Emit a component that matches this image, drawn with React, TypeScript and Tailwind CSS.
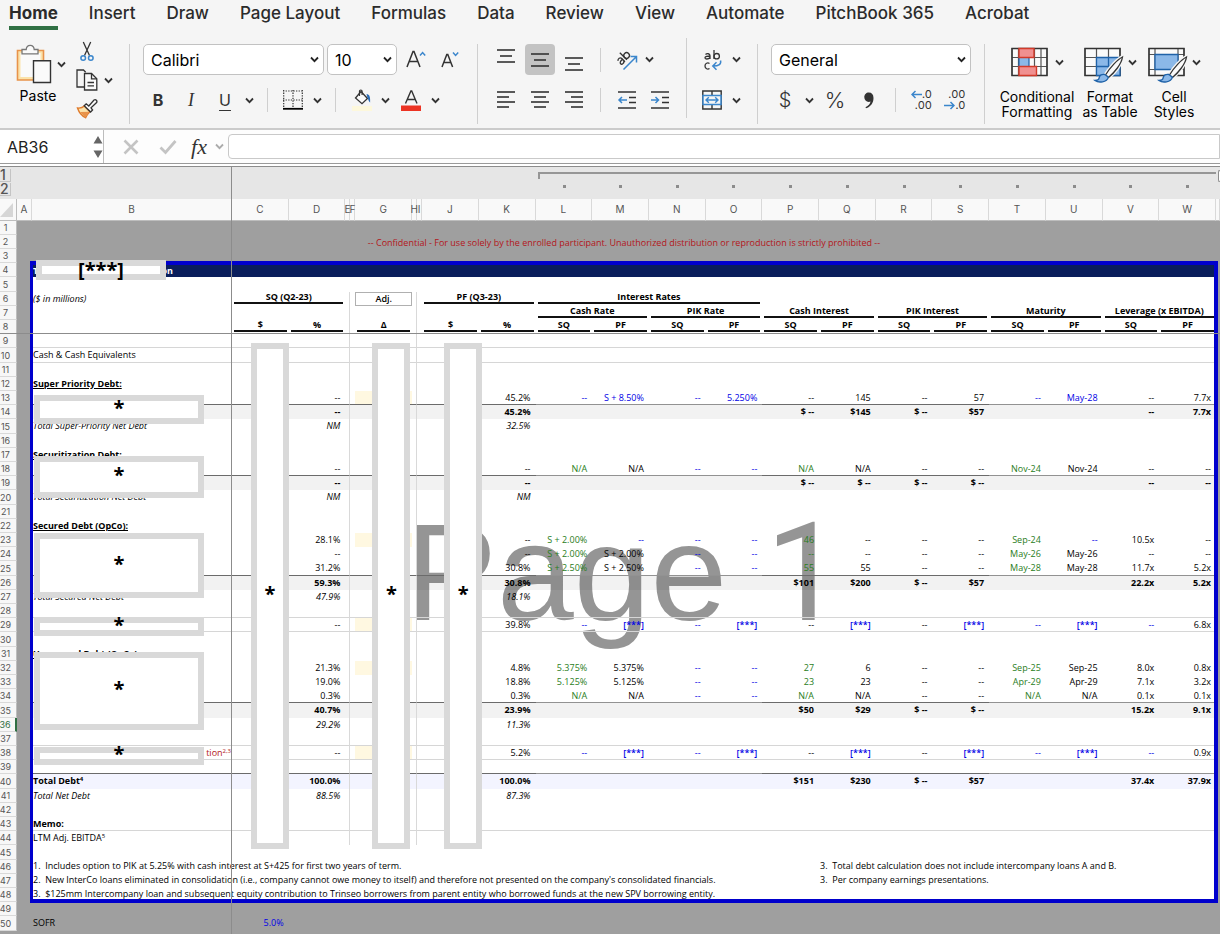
import React from 'react'
import clsx from 'clsx'

const TABS = ['Home', 'Insert', 'Draw', 'Page Layout', 'Formulas', 'Data', 'Review', 'View', 'Automate', 'PitchBook 365', 'Acrobat']

const COLUMNS = ['A', 'B', 'C', 'D', 'E', 'F', 'G', 'H', 'I', 'J', 'K', 'L', 'M', 'N', 'O', 'P', 'Q', 'R', 'S', 'T', 'U', 'V', 'W', 'X']
const BODY_COLUMNS = COLUMNS.slice(2, 23)
const GROUPED = COLUMNS.slice(11, 23)

const COLUMN_WIDTHS: Record<string, string> = {
  A: 'w-[15px]',
  B: 'w-[200px]',
  E: 'w-[5px]',
  F: 'w-[5px]',
  H: 'w-[5px]',
  I: 'w-[5px]',
  X: 'w-[4px]',
}

type Kind = 'normal' | 'total' | 'grand' | 'italic'

interface RowData {
  label?: React.ReactNode
  labelClass?: string
  kind?: Kind
  // a "b:" prefix is an input (blue), "g:" is a link to another sheet (green)
  cells?: Record<string, string>
}

const ROWS: Record<number, RowData> = {
  10: { label: 'Cash & Cash Equivalents' },
  12: { label: 'Super Priority Debt:', labelClass: 'font-bold underline' },
  13: {
    cells: { D: '--', K: '45.2%', L: 'b:--', M: 'b:S + 8.50%', N: 'b:--', O: 'b:5.250%', P: '--', Q: '145', R: '--', S: '57', T: 'b:--', U: 'b:May-28', V: '--', W: '7.7x' },
  },
  14: { kind: 'total', cells: { D: '--', K: '45.2%', P: '$ --', Q: '$145', R: '$ --', S: '$57', V: '--', W: '7.7x' } },
  15: { label: 'Total Super-Priority Net Debt', kind: 'italic', cells: { D: 'NM', K: '32.5%' } },
  17: { label: 'Securitization Debt:', labelClass: 'font-bold underline' },
  18: {
    cells: { D: '--', K: '--', L: 'g:N/A', M: 'N/A', N: 'b:--', O: 'b:--', P: 'g:N/A', Q: 'N/A', R: '--', S: '--', T: 'g:Nov-24', U: 'Nov-24', V: '--', W: '--' },
  },
  19: { kind: 'total', cells: { D: '--', K: '--', P: '$ --', Q: '$ --', R: '$ --', S: '$ --', V: '--', W: '--' } },
  20: { label: 'Total Securitization Net Debt', kind: 'italic', cells: { D: 'NM', K: 'NM' } },
  22: { label: 'Secured Debt (OpCo):', labelClass: 'font-bold underline' },
  23: {
    cells: { D: '28.1%', K: '--', L: 'g:S + 2.00%', M: 'b:--', N: 'b:--', O: 'b:--', P: 'g:46', Q: '--', R: '--', S: '--', T: 'g:Sep-24', U: 'b:--', V: '10.5x', W: '--' },
  },
  24: {
    cells: { D: '--', K: '--', L: 'g:S + 2.00%', M: 'S + 2.00%', N: 'b:--', O: 'b:--', P: 'g:--', Q: '--', R: '--', S: '--', T: 'g:May-26', U: 'May-26', V: '--', W: '--' },
  },
  25: {
    cells: { D: '31.2%', K: '30.8%', L: 'g:S + 2.50%', M: 'S + 2.50%', N: 'b:--', O: 'b:--', P: 'g:55', Q: '55', R: '--', S: '--', T: 'g:May-28', U: 'May-28', V: '11.7x', W: '5.2x' },
  },
  26: { kind: 'total', cells: { D: '59.3%', K: '30.8%', P: '$101', Q: '$200', R: '$ --', S: '$57', V: '22.2x', W: '5.2x' } },
  27: { label: 'Total Secured Net Debt', kind: 'italic', cells: { D: '47.9%', K: '18.1%' } },
  29: {
    cells: { D: '--', K: '39.8%', L: 'b:--', M: 'b:[***]', N: 'b:--', O: 'b:[***]', P: '--', Q: 'b:[***]', R: '--', S: 'b:[***]', T: 'b:--', U: 'b:[***]', V: 'b:--', W: '6.8x' },
  },
  31: { label: 'Unsecured Debt (OpCo):', labelClass: 'font-bold underline' },
  32: {
    cells: { D: '21.3%', K: '4.8%', L: 'g:5.375%', M: '5.375%', N: 'b:--', O: 'b:--', P: 'g:27', Q: '6', R: '--', S: '--', T: 'g:Sep-25', U: 'Sep-25', V: '8.0x', W: '0.8x' },
  },
  33: {
    cells: { D: '19.0%', K: '18.8%', L: 'g:5.125%', M: '5.125%', N: 'b:--', O: 'b:--', P: 'g:23', Q: '23', R: '--', S: '--', T: 'g:Apr-29', U: 'Apr-29', V: '7.1x', W: '3.2x' },
  },
  34: {
    cells: { D: '0.3%', K: '0.3%', L: 'g:N/A', M: 'N/A', N: 'b:--', O: 'b:--', P: 'g:N/A', Q: 'N/A', R: '--', S: '--', T: 'g:N/A', U: 'N/A', V: '0.1x', W: '0.1x' },
  },
  35: { kind: 'total', cells: { D: '40.7%', K: '23.9%', P: '$50', Q: '$29', R: '$ --', S: '$ --', V: '15.2x', W: '9.1x' } },
  36: { kind: 'italic', cells: { D: '29.2%', K: '11.3%' } },
  38: {
    label: (
      <>
        tion<sup className="text-[6px]">2,3</sup>
      </>
    ),
    labelClass: 'text-right text-[#b3161b]',
    cells: { D: '--', K: '5.2%', L: 'b:--', M: 'b:[***]', N: 'b:--', O: 'b:[***]', P: '--', Q: 'b:[***]', R: '--', S: 'b:[***]', T: 'b:--', U: 'b:[***]', V: 'b:--', W: '0.9x' },
  },
  40: {
    label: (
      <>
        Total Debt<sup className="text-[6px]">4</sup>
      </>
    ),
    kind: 'grand',
    cells: { D: '100.0%', K: '100.0%', P: '$151', Q: '$230', R: '$ --', S: '$57', V: '37.4x', W: '37.9x' },
  },
  41: { label: 'Total Net Debt', kind: 'italic', cells: { D: '88.5%', K: '87.3%' } },
  43: { label: 'Memo:', labelClass: 'font-bold' },
  44: {
    label: (
      <>
        LTM Adj. EBITDA<sup className="text-[6px]">5</sup>
      </>
    ),
  },
  50: { label: 'SOFR', cells: { C: 'b:5.0%' } },
}

const NOTES: Record<number, [string, string]> = {
  46: [
    '1.  Includes option to PIK at 5.25% with cash interest at S+425 for first two years of term.',
    '3.  Total debt calculation does not include intercompany loans A and B.',
  ],
  47: [
    "2.  New InterCo loans eliminated in consolidation (i.e., company cannot owe money to itself) and therefore not presented on the company's consolidated financials.",
    '3.  Per company earnings presentations.',
  ],
  48: [
    '3.  $125mm Intercompany loan and subsequent equity contribution to Trinseo borrowers from parent entity who borrowed funds at the new SPV borrowing entity.',
    '',
  ],
}

const LIGHT_LINE = [9, 10, 28, 29, 37, 38, 43]
const DARK_LINE = [13, 18, 25, 34, 39]
const YELLOW = [13, 23, 29, 32, 38]

// redaction boxes, keyed by the row they hang from
const BOXES: Record<number, string> = {
  13: 'top-[4px] h-[29px]',
  17: 'top-[8px] h-[42px]',
  23: 'top-0 h-[65px]',
  29: '-top-px h-[19px]',
  31: 'top-[5px] h-[78px]',
  38: 'top-px h-[18px]',
}

const rowHeight = (n: number) => (n % 5 === 0 ? 'h-[15px]' : 'h-[14px]')

function Chevron({ className = 'text-[#333]' }: { className?: string }) {
  return (
    <svg width="9" height="7" viewBox="0 0 9 7" fill="none" stroke="currentColor" strokeWidth="1.8" className={clsx('shrink-0', className)}>
      <path d="M1 1.5l3.5 3.6L8 1.5" />
    </svg>
  )
}

function MenuButton({ label, className }: { label: string; className: string }) {
  return (
    <button aria-label={label} className={clsx('flex h-6 items-center justify-center', className)}>
      <Chevron />
    </button>
  )
}

function Tool({ label, className, children }: { label: string; className: string; children: React.ReactNode }) {
  return (
    <button aria-label={label} className={clsx('flex items-center justify-center text-[#333]', className)}>
      {children}
    </button>
  )
}

function SmallDivider({ className }: { className: string }) {
  return (
    <div className={clsx('flex justify-center', className)}>
      <div className="h-6 w-px bg-[#cfcfcf]" />
    </div>
  )
}

function Divider({ className = 'mt-[9px]' }: { className?: string }) {
  return <div className={clsx('h-20 w-px shrink-0 bg-[#cfcfcf]', className)} />
}

function Picker({ label, value, className }: { label: string; value: string; className: string }) {
  return (
    <label className={clsx('relative block', className)}>
      <select
        aria-label={label}
        defaultValue={value}
        className="h-[31px] w-full appearance-none rounded-[5px] border border-[#c2c2c2] bg-white pl-[7px] text-base text-black"
      >
        <option>{value}</option>
      </select>
      <Chevron className="pointer-events-none absolute top-3 right-[5px] text-[#222]" />
    </label>
  )
}

// three or four horizontal strokes, given as [x1, x2] pairs
function Lines({ strokes, gap, height = 20 }: { strokes: [number, number][]; gap: number; height?: number }) {
  return (
    <svg width="20" height={height} viewBox={`0 0 20 ${height}`} stroke="#333" strokeWidth="1.6">
      {strokes.map(([a, b], i) => (
        <path key={i} d={`M${a} ${2 + i * gap}H${b}`} />
      ))}
    </svg>
  )
}

function PasteIcon() {
  return (
    <svg width="36" height="40" viewBox="0 0 36 40" fill="none">
      <path d="M1.5 6.5h26v29.5h-26z" fill="#fbe3ab" stroke="#e8934a" strokeWidth="1.6" />
      <path d="M4.5 9h20v24h-20z" fill="#fafafa" />
      <path d="M6 9.800V5.500h4.200c.2-2.600 1.700-4.200 4-4.200s3.800 1.600 4 4.200H22v4.300z" fill="#fafafa" stroke="#777" strokeWidth="1.300" />
      <path d="M17.500 16.800h17v21.700h-17z" fill="#fafafa" stroke="#333" strokeWidth="1.400" />
    </svg>
  )
}

function CutIcon() {
  return (
    <svg width="14" height="21" viewBox="0 0 14 21" fill="none">
      <path d="M3.300 1l6.200 13.500M10.700 1L4.500 14.500" stroke="#333" strokeWidth="1.300" />
      <circle cx="3.200" cy="17" r="2.300" stroke="#3b86cc" strokeWidth="1.500" />
      <circle cx="10.800" cy="17" r="2.300" stroke="#3b86cc" strokeWidth="1.500" />
    </svg>
  )
}

function CopyIcon() {
  return (
    <svg width="22" height="22" viewBox="0 0 22 22" fill="none" stroke="#333" strokeWidth="1.300">
      <path d="M8 18H1V1h6.500l2.200 2.200" />
      <path d="M8.500 4.500h7l5.300 5.300V21H8.500z" fill="#fafafa" />
      <path d="M15.500 4.500v5.300h5.300M11.500 13.500h6.500M11.500 16.800h6.500" />
    </svg>
  )
}

function BrushIcon() {
  return (
    <svg width="22" height="21" viewBox="0 0 22 21" fill="none">
      <path d="M1.500 10c2.500.3 5-.2 6.800-1.900l5.600 5.700c-2 1.900-3.300 3.500-4.300 5.900C6 18 3 14.500 1.500 10z" fill="#fbe3ab" stroke="#e07b2c" strokeWidth="1.400" />
      <path d="M4 14l9.500-.2-4 5.600z" fill="#e8934a" />
      <path d="M8.200 7.800l2-2 2.600 2.200 5.200-6c1.800-1 3.600.8 2.600 2.600l-5.600 5.200 1.600 2.200-2 2z" fill="#fafafa" stroke="#333" strokeWidth="1.300" />
    </svg>
  )
}

function GrowIcon({ up }: { up: boolean }) {
  return (
    <svg width="20" height="20" viewBox="0 0 20 20" fill="none">
      {up ? (
        <>
          <path d="M1 17L7 1.500h1L14 17M3.200 11.500h8.600" stroke="#333" strokeWidth="1.500" />
          <path d="M14 5.500l2.600-2.900 2.600 2.900" stroke="#3b86cc" strokeWidth="1.500" />
        </>
      ) : (
        <>
          <path d="M2 17L6.800 4.500h1L12.600 17M3.900 12.500h6.800" stroke="#333" strokeWidth="1.500" />
          <path d="M13 2.500l2.600 2.900 2.600-2.900" stroke="#3b86cc" strokeWidth="1.500" />
        </>
      )}
    </svg>
  )
}

function BordersIcon() {
  return (
    <svg width="20" height="20" viewBox="0 0 20 20" fill="none" stroke="#333" strokeWidth="1.200">
      <path d="M0 1h20M0 10h20M.700 0v18M10 0v18M19.300 0v18" strokeDasharray="1.300 1.300" />
      <path d="M0 18.800h20" stroke="#000" strokeWidth="1.800" />
    </svg>
  )
}

function FillIcon() {
  return (
    <svg width="20" height="22" viewBox="0 0 20 22" fill="none">
      <path d="M9 2.500l6.500 7-5.500 5.200L3.500 9z" fill="#fafafa" stroke="#333" strokeWidth="1.300" />
      <path d="M7.500 7V2.200c0-1.600 2.600-1.600 2.600 0V6" stroke="#333" strokeWidth="1.200" />
      <path d="M14.500 5c3 .3 4 3 3.600 8.500-1.500-1-1.800-3.500-2.600-4.500z" fill="#2b6cb5" />
      <path d="M0 17h20v5H0z" fill="#fdf8dc" />
    </svg>
  )
}

function FontColorIcon() {
  return (
    <svg width="20" height="22" viewBox="0 0 20 22" fill="none">
      <path d="M4.500 14.500L9.900 2h.8L16 14.500M6.300 10.500h8" stroke="#333" strokeWidth="1.400" />
      <path d="M0 16.500h20V22H0z" fill="#ec3323" />
    </svg>
  )
}

function OrientationIcon() {
  return (
    <svg width="22" height="22" viewBox="0 0 22 22" fill="none">
      <g transform="rotate(-45 7 9)">
        <path d="M1.500 7.500c1.200-1.800 4.300-1.300 4.300 1V13M5.800 9.500c-2.500-.2-4.600.4-4.600 1.900 0 2 3.200 2.100 4.600 0" stroke="#333" strokeWidth="1.300" />
        <path d="M8.500 3v10" stroke="#333" strokeWidth="1.300" />
        <circle cx="11.300" cy="9.800" r="2.800" stroke="#333" strokeWidth="1.300" />
      </g>
      <path d="M7.500 20.500L20.500 7.500M14.500 7.500h6v6" stroke="#3b86cc" strokeWidth="1.500" />
    </svg>
  )
}

function IndentIcon({ increase }: { increase: boolean }) {
  return (
    <svg width="20" height="20" viewBox="0 0 20 20" fill="none">
      <path d="M1 2h18M12 7.500h7M12 12.500h7M1 18h18" stroke="#333" strokeWidth="1.600" />
      <path d={increase ? 'M1 10h7.500M5.500 7l3 3-3 3' : 'M2 10h8M5 7l-3 3 3 3'} stroke="#3b86cc" strokeWidth="1.500" />
    </svg>
  )
}

function WrapIcon() {
  return (
    <svg width="20" height="22" viewBox="0 0 20 22" fill="none" strokeWidth="1.300">
      <g stroke="#333">
        <path d="M2.500 5.500c1.500-1.400 4.500-1 4.500 1.200V10M7 7c-2.500 0-5 .2-5 1.800S5.500 10.500 7 8.500" />
        <path d="M11 1v9" />
        <circle cx="13.700" cy="7.200" r="2.700" />
        <path d="M6.500 14.500c-1.800-1.200-4.500-.2-4.500 2.500s2.700 3.700 4.500 2.500" />
      </g>
      <path d="M17.500 11.500c1 3.500-1.500 5.500-7.500 5.500M13.500 13.300L9.800 17l3.700 3.700" stroke="#3b86cc" strokeWidth="1.500" />
    </svg>
  )
}

function MergeIcon() {
  return (
    <svg width="20" height="20" viewBox="0 0 20 20" fill="none">
      <path d="M.800 1h18.400v18H.800zM10 1v4M10 15v4" stroke="#333" strokeWidth="1.400" />
      <path d="M1 5.500h18v9H1z" fill="#f4f4f4" stroke="#3b86cc" strokeWidth="1.500" />
      <path d="M4 10h12M6.800 7.200L4 10l2.800 2.800M13.200 7.200L16 10l-2.800 2.800" stroke="#3b86cc" strokeWidth="1.400" />
    </svg>
  )
}

function DecimalIcon({ increase }: { increase: boolean }) {
  return (
    <span className="flex w-[22px] flex-col text-[11px] leading-[11px] tabular-nums">
      <span className="flex items-center justify-end">
        {increase && (
          <svg width="11" height="9" viewBox="0 0 11 9" fill="none" stroke="#3b86cc" strokeWidth="1.500">
            <path d="M11 4.500H1M4.500 1L1 4.500 4.500 8" />
          </svg>
        )}
        {increase ? '.0' : '.00'}
      </span>
      <span className="flex items-center justify-end">
        {!increase && (
          <svg width="11" height="9" viewBox="0 0 11 9" fill="none" stroke="#3b86cc" strokeWidth="1.500">
            <path d="M0 4.500h10M6.500 1L10 4.500 6.500 8" />
          </svg>
        )}
        {increase ? '.00' : '.0'}
      </span>
    </span>
  )
}

function PaintBrush() {
  return (
    <>
      <path d="M38.500 10c-5 2.500-12.500 10.500-17 18l3 2.500c6-5 13-13.500 14-20.500z" fill="#fafafa" stroke="#f5f5f5" strokeWidth="4" />
      <path d="M38.500 10c-5 2.500-12.500 10.500-17 18l3 2.500c6-5 13-13.500 14-20.500z" fill="#fafafa" stroke="#333" strokeWidth="1.300" />
      <path d="M21 27.500c-3-.8-5.500.8-5.800 3.200-.2 1.800-1.700 2.800-4.200 2.800 3.500 2.500 12 2 13.300-3.200z" fill="#8bb8e8" stroke="#1f62a8" strokeWidth="1.300" />
    </>
  )
}

function ConditionalIcon() {
  return (
    <svg width="38" height="36" viewBox="0 0 38 36" fill="none">
      <path d="M1 1.500h35v27H1zM1 10.500h35M1 19.500h35M7.500 1.500v27M23.500 1.500v27M30 1.500v27" fill="#fafafa" stroke="#555" strokeWidth="1.200" />
      <path d="M1 1.500h35v27H1z" stroke="#333" strokeWidth="1.400" />
      <path d="M8 10.500h10v9H8z" fill="#8bb8e8" stroke="#1f62a8" strokeWidth="1.200" />
      <path d="M8 1.500h15v9H8zM8 19.500h17.500v9H8z" fill="#f09090" stroke="#d23a2a" strokeWidth="1.400" />
    </svg>
  )
}

function FormatTableIcon() {
  return (
    <svg width="40" height="36" viewBox="0 0 40 36" fill="none">
      <path d="M1 1.500h35v27H1zM1 10.500h35M1 19.500h35M12.500 1.500v27M24.500 1.500v27" fill="#fafafa" stroke="#555" strokeWidth="1.200" />
      <path d="M1 1.500h35v27H1z" stroke="#333" strokeWidth="1.400" />
      <path d="M12.500 10.500h23.500v18H12.500zM12.500 19.500h23.500M24.500 10.500v18" fill="#8bb8e8" stroke="#1f62a8" strokeWidth="1.300" />
      <PaintBrush />
    </svg>
  )
}

function CellStylesIcon() {
  return (
    <svg width="40" height="36" viewBox="0 0 40 36" fill="none">
      <path d="M1 1.500h35v27H1zM1 7.500h35M1 22.500h35M7 1.500v27M30 1.500v27" fill="#fafafa" stroke="#555" strokeWidth="1.200" />
      <path d="M1 1.500h35v27H1z" stroke="#333" strokeWidth="1.400" />
      <path d="M7 7.500h23v15H7z" fill="#8bb8e8" stroke="#1f62a8" strokeWidth="1.300" />
      <PaintBrush />
    </svg>
  )
}

function Ribbon() {
  return (
    <header className="border-b-2 border-[#cbcbcb] bg-[#f5f5f5]">
      <nav className="flex h-[35px] items-start gap-[31px] overflow-hidden pl-[9px] text-[17px] leading-[26px] font-medium whitespace-nowrap text-[#2b2b2b]">
        {TABS.map((tab, i) => (
          <a key={tab} href="#" className={clsx('block', i === 0 && 'h-[30px] border-b-4 border-[#2f6f43] font-bold')}>
            {tab}
          </a>
        ))}
      </nav>
      <div className="flex h-[93px] overflow-hidden">
        {/* clipboard */}
        <div className="flex w-[129px] shrink-0 pt-[6px] pl-4">
          <button className="flex w-[50px] flex-col text-sm text-black">
            <span className="flex items-center gap-[5px] pt-[3px]">
              <PasteIcon />
              <Chevron />
            </span>
            <span className="mt-[2px] w-11 text-center">Paste</span>
          </button>
          <div className="ml-[10px] flex flex-col gap-[6px]">
            <Tool label="Cut" className="w-[22px]">
              <CutIcon />
            </Tool>
            <div className="flex">
              <Tool label="Copy" className="w-[22px]">
                <CopyIcon />
              </Tool>
              <MenuButton label="Copy options" className="w-5" />
            </div>
            <Tool label="Format Painter" className="w-[22px]">
              <BrushIcon />
            </Tool>
          </div>
        </div>
        <Divider />
        {/* font */}
        <div className="w-[347px] shrink-0 pt-[9px] pl-[13px]">
          <div className="flex items-center">
            <Picker label="Font" value="Calibri" className="mr-[3px] w-[181px]" />
            <Picker label="Font size" value="10" className="w-[70px]" />
            <Tool label="Increase font size" className="w-[37px]">
              <GrowIcon up />
            </Tool>
            <Tool label="Decrease font size" className="w-8">
              <GrowIcon up={false} />
            </Tool>
          </div>
          <div className="mt-[13px] flex h-6 items-center">
            <Tool label="Bold" className="w-[30px] text-base font-bold">
              B
            </Tool>
            <Tool label="Italic" className="w-9 font-['Liberation_Serif',serif] text-lg italic">
              I
            </Tool>
            <Tool label="Underline" className="w-8 text-base underline underline-offset-4">
              U
            </Tool>
            <MenuButton label="Underline options" className="w-4" />
            <SmallDivider className="w-5" />
            <Tool label="Borders" className="w-8">
              <BordersIcon />
            </Tool>
            <MenuButton label="Border options" className="w-4" />
            <SmallDivider className="w-5" />
            <Tool label="Fill color" className="w-[34px]">
              <FillIcon />
            </Tool>
            <MenuButton label="Fill color options" className="w-3" />
            <Tool label="Font color" className="w-10">
              <FontColorIcon />
            </Tool>
            <MenuButton label="Font color options" className="w-2" />
          </div>
        </div>
        <Divider />
        {/* alignment */}
        <div className="w-[208px] shrink-0 pt-[9px] pl-3">
          <div className="flex h-[31px] items-center">
            <Tool label="Top align" className="mr-[3px] w-8 pb-2">
              <Lines gap={6} height={16} strokes={[[1, 19], [4, 16], [1, 19]]} />
            </Tool>
            <Tool label="Middle align" className="mr-[3px] h-[31px] w-[30px] rounded bg-[#c3c3c3]">
              <Lines gap={6} height={16} strokes={[[1, 19], [4, 16], [1, 19]]} />
            </Tool>
            <Tool label="Bottom align" className="w-[31px] pt-2">
              <Lines gap={6} height={16} strokes={[[1, 19], [4, 16], [1, 19]]} />
            </Tool>
            <SmallDivider className="w-[22px]" />
            <Tool label="Orientation" className="w-[31px]">
              <OrientationIcon />
            </Tool>
            <MenuButton label="Orientation options" className="w-[14px]" />
          </div>
          <div className="mt-[13px] flex h-6 items-center">
            <Tool label="Align left" className="w-8">
              <Lines gap={5} strokes={[[1, 19], [1, 13], [1, 19], [1, 13]]} />
            </Tool>
            <Tool label="Center" className="w-9">
              <Lines gap={5} strokes={[[1, 19], [4, 16], [1, 19], [4, 16]]} />
            </Tool>
            <Tool label="Align right" className="w-[31px]">
              <Lines gap={5} strokes={[[1, 19], [7, 19], [1, 19], [7, 19]]} />
            </Tool>
            <SmallDivider className="w-[22px]" />
            <Tool label="Decrease indent" className="w-[31px]">
              <IndentIcon increase={false} />
            </Tool>
            <Tool label="Increase indent" className="w-[35px]">
              <IndentIcon increase />
            </Tool>
          </div>
        </div>
        <Divider className="mt-[3px]" />
        <div className="w-[70px] shrink-0 pt-[9px] pl-[10px]">
          <div className="flex h-[31px] items-center">
            <Tool label="Wrap text" className="w-8">
              <WrapIcon />
            </Tool>
            <MenuButton label="Wrap options" className="w-[14px]" />
          </div>
          <div className="mt-[13px] flex h-6 items-center">
            <Tool label="Merge and center" className="w-[30px]">
              <MergeIcon />
            </Tool>
            <MenuButton label="Merge options" className="w-[18px]" />
          </div>
        </div>
        <Divider />
        {/* number */}
        <div className="w-[226px] shrink-0 pt-[9px] pl-[13px]">
          <Picker label="Number format" value="General" className="w-[200px]" />
          <div className="mt-[13px] flex h-6 items-center">
            <Tool label="Currency" className="w-7 text-xl font-light">
              $
            </Tool>
            <MenuButton label="Currency options" className="w-5" />
            <Tool label="Percent" className="w-8 text-[22px] font-light">
              %
            </Tool>
            <Tool label="Comma style" className="w-9">
              <svg width="10" height="17" viewBox="0 0 10 17" fill="#333">
                <path d="M4.800.500c2.900 0 4.700 2 4.700 5.400 0 5.300-3.300 9-7.500 10.300l-.5-1c2.900-1.300 4.700-3.300 5-5.700-.5.300-1.100.4-1.700.4C2.200 9.900.300 8 .300 5.300S2.200.500 4.800.500z" />
              </svg>
            </Tool>
            <SmallDivider className="w-4" />
            <Tool label="Increase decimal" className="w-9">
              <DecimalIcon increase />
            </Tool>
            <Tool label="Decrease decimal" className="w-[31px]">
              <DecimalIcon increase={false} />
            </Tool>
          </div>
        </div>
        <Divider />
        {/* styles */}
        <div className="flex flex-1 pt-3 pl-[13px] text-sm leading-[15px] text-black">
          <button className="flex w-[78px] shrink-0 flex-col items-center gap-[6px]">
            <span className="flex items-center gap-[6px]">
              <ConditionalIcon />
              <Chevron className="mb-[6px] text-[#333]" />
            </span>
            <span>
              Conditional
              <br />
              Formatting
            </span>
          </button>
          <button className="ml-[6px] flex w-[56px] shrink-0 flex-col items-center gap-[6px] whitespace-nowrap">
            <span className="flex items-center gap-1">
              <FormatTableIcon />
              <Chevron className="mb-[6px] text-[#333]" />
            </span>
            <span>
              Format
              <br />
              as Table
            </span>
          </button>
          <button className="ml-2 flex w-[56px] shrink-0 flex-col items-center gap-[6px]">
            <span className="flex items-center gap-1">
              <CellStylesIcon />
              <Chevron className="mb-[6px] text-[#333]" />
            </span>
            <span>
              Cell
              <br />
              Styles
            </span>
          </button>
        </div>
      </div>
    </header>
  )
}

function FormulaBar() {
  return (
    <div className="flex h-[34px] border-b border-[#9a9a9a] bg-[#fdfdfd]">
      <div className="flex w-[104px] shrink-0 items-center border-r border-[#bdbdbd] bg-white pl-[7px]">
        <input aria-label="Name box" defaultValue="AB36" className="w-[82px] bg-transparent text-base text-[#222] outline-none" />
        <svg width="10" height="22" viewBox="0 0 10 22" fill="#666" className="ml-1">
          <path d="M5 0l4.500 7.500h-9zM5 22l4.500-7.500h-9z" />
        </svg>
      </div>
      <button aria-label="Cancel" className="ml-[19px] w-4">
        <svg width="16" height="16" viewBox="0 0 16 16" stroke="#c4c4c4" strokeWidth="2.600">
          <path d="M1.500 1.500l13 13M14.500 1.500l-13 13" />
        </svg>
      </button>
      <button aria-label="Enter" className="ml-5 w-[18px]">
        <svg width="18" height="16" viewBox="0 0 18 16" fill="none" stroke="#c4c4c4" strokeWidth="2.800">
          <path d="M1.500 8.500l5 5L16.500 2" />
        </svg>
      </button>
      <button aria-label="Insert function" className="ml-3 w-5 font-['Liberation_Serif',serif] text-[22px] leading-none text-[#333] italic">
        fx
      </button>
      <MenuButton label="Functions" className="ml-1 w-3 self-center opacity-40" />
      <input aria-label="Formula" className="my-1 ml-[3px] min-w-0 flex-1 rounded-l border border-[#c9c9c9] bg-white px-2 text-sm outline-none" />
    </div>
  )
}

function lineColor(column: string, dark: boolean) {
  if (!dark) return 'border-b border-b-[#d6d6d6]'
  return GROUPED.includes(column) && !['P', 'Q', 'R', 'S'].includes(column) ? 'border-b border-b-[#929292]' : 'border-b border-b-[#6b6b6b]'
}

function rowLine(n: number, column: string) {
  if (LIGHT_LINE.includes(n)) return lineColor(column, false)
  if (DARK_LINE.includes(n)) return lineColor(column, true)
  return ''
}

function RowHead({ n }: { n: number }) {
  return (
    <th
      scope="row"
      className={clsx(
        'overflow-hidden border-b bg-[#f7f7f7] p-0 pr-[5px] text-center font-["Inter",sans-serif] text-[9px] leading-[13px] font-normal',
        n === 8 ? 'border-b-[#8f8f8f]' : 'border-b-[#d9d9d9]',
        n === 36 ? 'border-r-2 border-r-[#2f6f43] bg-[#ececec] text-[#2f6f43]' : 'border-r border-r-[#bdbdbd] text-[#555]',
      )}
    >
      <div className="flex justify-center">{n}</div>
    </th>
  )
}

function Redaction({ className, children = '*' }: { className: string; children?: React.ReactNode }) {
  return (
    <div className={clsx('absolute z-20 flex items-center justify-center border-[6px] border-[#d9d9d9] bg-white text-xl font-bold text-black', className)}>
      {children}
    </div>
  )
}

function Heading({ children }: { children?: React.ReactNode }) {
  return <div className="mx-[2px] h-3 border-b-2 border-[#111] text-center leading-[10px] font-bold whitespace-nowrap">{children}</div>
}

function HeadCell({ span = 1, children }: { span?: number; children?: React.ReactNode }) {
  return (
    <td colSpan={span} className="p-0 align-top">
      {children && <Heading>{children}</Heading>}
    </td>
  )
}

function Rule() {
  return <td className="border-r border-[#d9d9d9] p-0" />
}

const Blank = ({ span = 1 }: { span?: number }) => <td colSpan={span} className="p-0" />

function TopRows() {
  return (
    <>
      <tr className="h-[14px]">
        <RowHead n={1} />
        <Blank span={24} />
      </tr>
      <tr className="h-[14px]">
        <RowHead n={2} />
        <Blank />
        <td colSpan={22} className="p-0 text-center text-[#b3161b]">
          -- Confidential - For use solely by the enrolled participant. Unauthorized distribution or reproduction is strictly prohibited --
        </td>
        <Blank />
      </tr>
      <tr className="h-[14px]">
        <RowHead n={3} />
        <Blank span={24} />
      </tr>
      <tr className="h-[14px]">
        <RowHead n={4} />
        <Blank />
        <td className="relative bg-[#0a1e5c] p-0 pl-px font-bold text-white">
          <div className="flex w-[140px] justify-between">
            <span>T</span>
            <span>on</span>
          </div>
          <Redaction className="-top-[3px] left-1 h-5 w-[130px] leading-5">[***]</Redaction>
        </td>
        <td colSpan={21} className="bg-[#0a1e5c] p-0" />
        <Blank />
      </tr>
      <tr className="h-[15px]">
        <RowHead n={5} />
        <Blank span={24} />
      </tr>
      <tr className="h-[14px]">
        <RowHead n={6} />
        <Blank />
        <td className="p-0 pl-px align-top italic">($ in millions)</td>
        <HeadCell span={2}>SQ (Q2-23)</HeadCell>
        <Rule />
        <Blank />
        <td className="border border-[#b0b0b0] p-0 text-center leading-3 font-semibold">Adj.</td>
        <Rule />
        <Blank />
        <HeadCell span={2}>PF (Q3-23)</HeadCell>
        <HeadCell span={4}>Interest Rates</HeadCell>
        <Blank span={9} />
      </tr>
      <tr className="h-[14px]">
        <RowHead n={7} />
        <Blank span={4} />
        <Rule />
        <Blank span={2} />
        <Rule />
        <Blank span={3} />
        {['Cash Rate', 'PIK Rate', 'Cash Interest', 'PIK Interest', 'Maturity', 'Leverage (x EBITDA)'].map((t) => (
          <HeadCell key={t} span={2}>
            {t}
          </HeadCell>
        ))}
        <Blank />
      </tr>
      <tr className="h-[14px]">
        <RowHead n={8} />
        <Blank span={2} />
        <HeadCell>$</HeadCell>
        <HeadCell>%</HeadCell>
        <Rule />
        <Blank />
        <HeadCell>Δ</HeadCell>
        <Rule />
        <Blank />
        <HeadCell>$</HeadCell>
        <HeadCell>%</HeadCell>
        {GROUPED.map((c, i) => (
          <HeadCell key={c}>{i % 2 === 0 ? 'SQ' : 'PF'}</HeadCell>
        ))}
        <Blank />
      </tr>
    </>
  )
}

function NoteRow({ n }: { n: number }) {
  const [left, right] = NOTES[n]
  return (
    <tr className={rowHeight(n)}>
      <RowHead n={n} />
      <Blank />
      <td colSpan={15} className="p-0 pl-px align-top leading-3 whitespace-pre">
        {left}
      </td>
      <td colSpan={7} className="p-0 pl-px align-top leading-3 whitespace-pre">
        {right}
      </td>
      <Blank />
    </tr>
  )
}

function DataRow({ n }: { n: number }) {
  const row = ROWS[n] ?? {}
  const kind = row.kind ?? 'normal'
  const shade = kind === 'total' ? 'bg-black/5' : kind === 'grand' ? 'bg-[#f3f4ff]' : ''
  const weight = kind === 'total' || kind === 'grand' ? 'font-bold' : kind === 'italic' ? 'italic' : ''
  return (
    <tr className={rowHeight(n)}>
      <RowHead n={n} />
      <Blank />
      <td className={clsx('relative p-0 px-px align-top', shade, weight, row.labelClass, rowLine(n, 'B'))}>
        {row.label}
        {BOXES[n] && <Redaction className={clsx('left-[2px] w-[170px] pb-1 leading-4', BOXES[n])} />}
      </td>
      {BODY_COLUMNS.map((c) => {
        const raw = row.cells?.[c] ?? ''
        const text = raw.replace(/^[bg]:/, '')
        const tall = n === 9 && (c === 'C' || c === 'G' || c === 'J')
        return (
          <td
            key={c}
            className={clsx(
              'p-0 text-right align-top',
              text && 'pr-[5px]',
              tall && 'relative',
              shade,
              weight,
              rowLine(n, c),
              text === '[***]' && 'font-semibold',
              c === 'G' && YELLOW.includes(n) && 'bg-[#fff8e1]',
              (c === 'E' || c === 'H') && n < 45 && 'border-r border-r-[#d9d9d9]',
              raw.startsWith('b:') && 'text-[#0000e6]',
              raw.startsWith('g:') && 'text-[#2a7d1b]',
            )}
          >
            {text}
            {tall && <Redaction className={clsx('top-[9px] h-[506px] w-[38px] pb-1', c === 'C' ? 'left-[19px]' : c === 'G' ? 'left-[17px]' : 'left-[22px]')} />}
          </td>
        )
      })}
      <Blank />
    </tr>
  )
}

function SheetHead() {
  return (
    <thead className="font-['Inter',sans-serif]">
      <tr className="h-[32px] bg-[#e6e6e6]">
        <td className="p-0 align-top">
          <div className="flex flex-col gap-px pt-[2px] text-sm leading-3 text-[#555]">
            <button className="h-[13px] w-[11px] border-r border-b border-[#c4c4c4] text-left">1</button>
            <button className="h-[13px] w-[11px] border-r border-b border-[#c4c4c4] text-left">2</button>
          </div>
        </td>
        <td colSpan={11} className="p-0" />
        {GROUPED.map((c) => (
          <td key={c} className="p-0 pt-[5px] align-top">
            <div className={clsx('flex h-4 flex-col items-center justify-end border-t-2 border-[#969696]', c === 'L' && 'ml-[2px]')}>
              {c === 'L' && <div className="h-[5px] w-[2px] self-start bg-[#969696]" />}
              <div className="mt-auto size-[3px] bg-[#8c8c8c]" />
            </div>
          </td>
        ))}
        <td className="p-0 pt-[3px] pl-[2px] align-top">
          <div className="h-3 rounded-l border border-r-0 border-[#8c8c8c] bg-white" />
        </td>
      </tr>
      <tr className="h-[22px] bg-[#f9f9f9] text-[10px] text-[#555]">
        <td className="border-r border-b border-[#bdbdbd] p-0 pr-px align-bottom">
          <svg width="13" height="14" viewBox="0 0 13 14" className="mb-[3px]">
            <path d="M13 0v14H0z" fill="#d6d6d6" />
          </svg>
        </td>
        {COLUMNS.map((c) => (
          <th key={c} scope="col" className="overflow-visible border-r border-b border-r-[#d9d9d9] border-b-[#bdbdbd] p-0 font-normal">
            <div className="flex justify-center">{c === 'X' ? '' : c}</div>
          </th>
        ))}
      </tr>
    </thead>
  )
}

function Sheet() {
  const rows = Array.from({ length: 42 }, (_, i) => i + 9)
  return (
    <main className="relative isolate mt-[2px] flex-1 overflow-hidden border-t border-[#8c8c8c] bg-[#9f9f9f]">
      {/* printed page: white paper and its watermark, behind the cells */}
      <div className="absolute top-[94px] right-[2px] -z-10 flex h-[642px] w-[calc(100%-32px)] items-center justify-center bg-white pb-5">
        <span className="font-['Liberation_Sans',sans-serif] text-[138px] leading-none text-[#959595]">
          Page <span className="font-['Roboto',sans-serif]">1</span>
        </span>
      </div>
      <table className="w-full table-fixed border-separate border-spacing-0 text-[9px] leading-[13px] font-medium whitespace-nowrap text-black">
        <colgroup>
          <col className="w-[17px]" />
          {COLUMNS.map((c) => (
            <col key={c} className={COLUMN_WIDTHS[c]} />
          ))}
        </colgroup>
        <SheetHead />
        <tbody>
          <TopRows />
          {rows.map((n) => (NOTES[n] ? <NoteRow key={n} n={n} /> : <DataRow key={n} n={n} />))}
        </tbody>
      </table>
      {/* print area frame */}
      <div className="pointer-events-none absolute top-[94px] right-[2px] z-10 h-[642px] w-[calc(100%-32px)] border-4 border-l-[3px] border-[#0000cd]" />
      {/* frozen panes */}
      <div className="pointer-events-none absolute inset-y-0 left-[231px] z-10 w-px bg-[#8c8c8c]" />
      <div className="pointer-events-none absolute top-[166px] left-0 z-10 h-px w-full bg-[#8c8c8c]" />
    </main>
  )
}

export default function App() {
  return (
    <div className="flex min-h-screen flex-col bg-white font-['Inter',sans-serif]">
      <Ribbon />
      <FormulaBar />
      <div className="flex flex-1 flex-col font-['Open_Sans',sans-serif]">
        <Sheet />
      </div>
    </div>
  )
}
